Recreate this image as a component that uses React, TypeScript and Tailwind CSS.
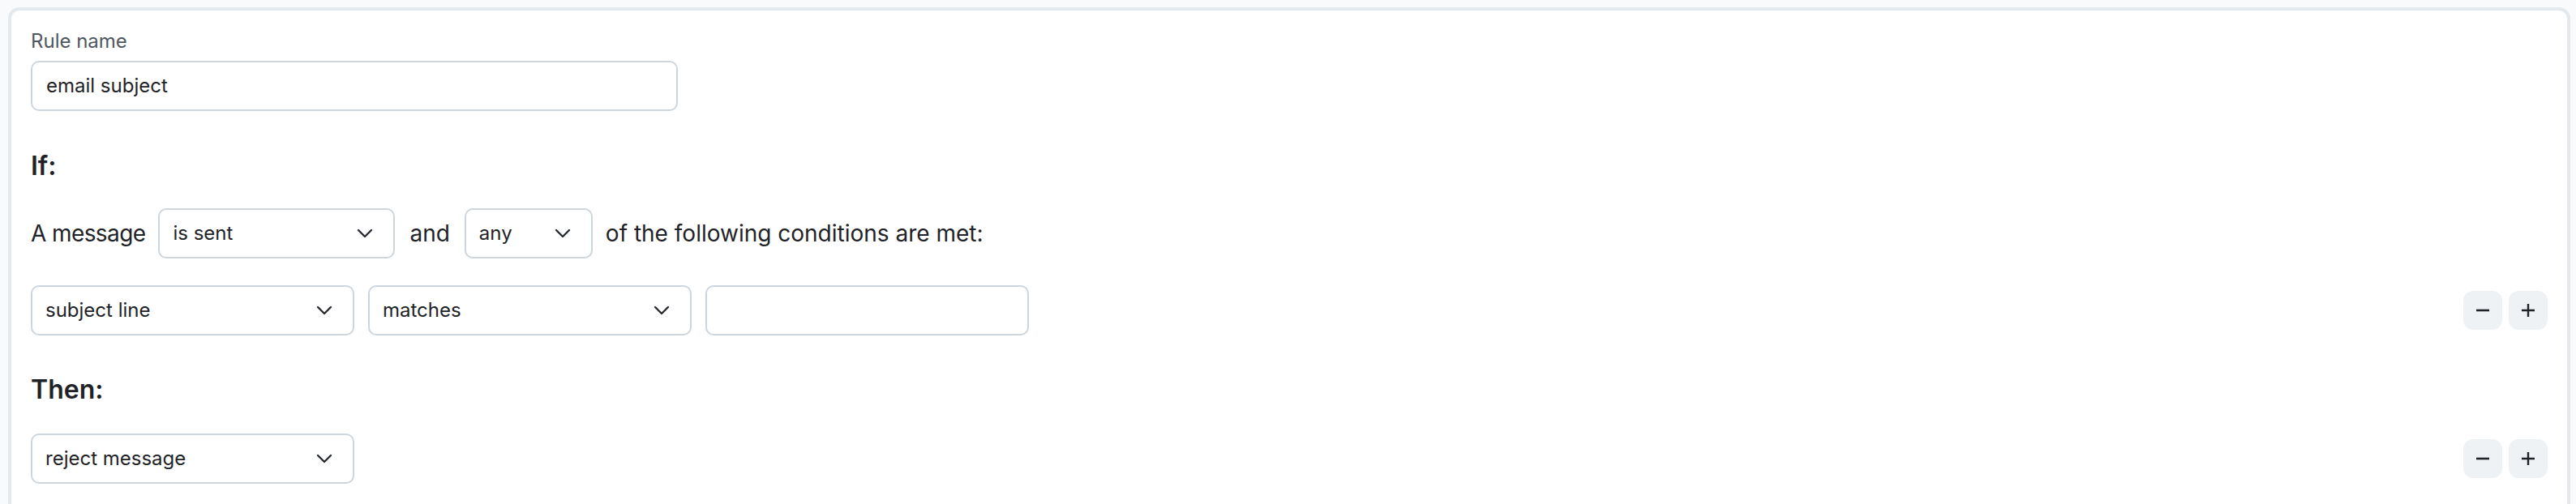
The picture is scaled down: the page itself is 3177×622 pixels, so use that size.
const Chevron = () => (
  <svg width="20" height="12" viewBox="0 0 20 12" fill="none" className="shrink-0">
    <path d="M2 2 L10 10 L18 2" stroke="#262b31" strokeWidth="2.4" strokeLinecap="round" strokeLinejoin="round" />
  </svg>
)

const Select = ({ value, width }: { value: string; width: string }) => (
  <div
    className={`${width} h-[62px] shrink-0 flex items-center justify-between rounded-[10px] border-2 border-[#cdd6dd] bg-white pl-[16px] pr-[25px] text-[24px] text-[#1f2328]`}
  >
    <span>{value}</span>
    <Chevron />
  </div>
)

const StepButtons = () => (
  <div className="ml-auto flex gap-[8px]">
    <button className="w-[48px] h-[48px] rounded-[12px] bg-[#eff2f5] flex items-center justify-center">
      <svg width="18" height="18" viewBox="0 0 18 18">
        <path d="M1 9 H17" stroke="#1f2328" strokeWidth="2.6" />
      </svg>
    </button>
    <button className="w-[48px] h-[48px] rounded-[12px] bg-[#eff2f5] flex items-center justify-center">
      <svg width="18" height="18" viewBox="0 0 18 18">
        <path d="M1 9 H17 M9 1 V17" stroke="#1f2328" strokeWidth="2.4" />
      </svg>
    </button>
  </div>
)

export default function App() {
  return (
    <div className="min-h-[622px] bg-[#f8fafb] pt-[9px] pl-[10px] pr-[7px]" style={{ fontFamily: 'Inter, "Noto Sans", sans-serif' }}>
      <div className="rounded-t-[14px] border-4 border-b-0 border-[#e3e9ec] bg-white px-[24px] pt-[22px] pb-[60px]">
        <div className="h-[32px] leading-[32px] text-[24px] text-[#4f5760]">Rule name</div>
        <div className="mt-[8px] w-[798px] h-[62px] flex items-center rounded-[10px] border-2 border-[#cdd6dd] pl-[17px] text-[24px] text-[#1f2328]">
          email subject
        </div>

        <h2 className="mt-[48px] h-[40px] leading-[40px] text-[32px] font-semibold text-[#1f2328]">If:</h2>

        <div className="mt-[32px] flex items-center gap-[16px] text-[28px] text-[#1f2328]">
          <span className="tracking-[-0.6px]">A message</span>
          <Select value="is sent" width="w-[292px]" />
          <span className="mx-[2px]">and</span>
          <Select value="any" width="w-[158px]" />
          <span>of the following conditions are met:</span>
        </div>

        <div className="mt-[33px] flex items-center gap-[17px]">
          <Select value="subject line" width="w-[399px]" />
          <Select value="matches" width="w-[399px]" />
          <div className="w-[399px] h-[62px] rounded-[10px] border-2 border-[#cdd6dd]" />
          <StepButtons />
        </div>

        <h2 className="mt-[47px] h-[40px] leading-[40px] text-[32px] font-semibold text-[#1f2328]">Then:</h2>

        <div className="mt-[34px] flex items-center">
          <Select value="reject message" width="w-[399px]" />
          <StepButtons />
        </div>
      </div>
    </div>
  )
}
